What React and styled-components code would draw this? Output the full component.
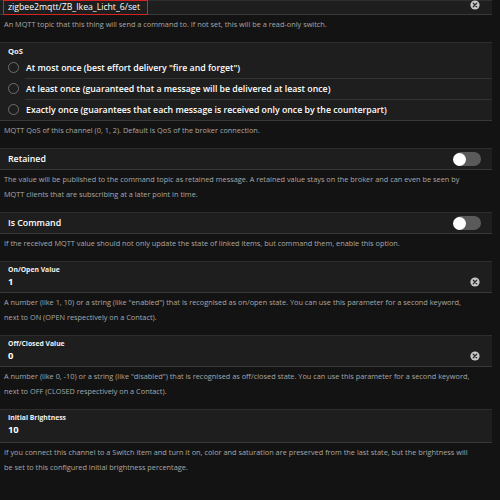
import styled, { createGlobalStyle } from "styled-components";

const GlobalStyle = createGlobalStyle`
    html, body {
        margin: 0;
        padding: 0;
        background-color: #141414;
    }
    body {
        font-family: "Open Sans", "Noto Sans", sans-serif;
        -webkit-font-smoothing: antialiased;
    }
`;

function ClearIcon() {
    return (
        <svg width="10" height="10" viewBox="0 0 10 10" style={{ display: "block" }}>
            <circle cx="5" cy="5" r="4.6" fill="#c8c8c8" />
            <path d="M3.3 3.3 L6.7 6.7 M6.7 3.3 L3.3 6.7" stroke="#2a2a2a" strokeWidth="1.3" strokeLinecap="round" />
        </svg>
    );
}

function App() {
    return (
        <>
            <GlobalStyle />
            <Page>
                <List>
                    {/* topic input, cut at the top edge */}
                    <Card height={15}>
                        <TopicInput>zigbee2mqtt/ZB_Ikea_Licht_6/set</TopicInput>
                        <ClearSlot top={-1}>
                            <ClearIcon />
                        </ClearSlot>
                    </Card>
                    <Hint>An MQTT topic that this thing will send a command to. If not set, this will be a read-only switch.</Hint>

                    {/* QoS */}
                    <Card>
                        <GroupTitle>QoS</GroupTitle>
                        <RadioRow>
                            <Radio />
                            <RadioLabel>At most once (best effort delivery "fire and forget")</RadioLabel>
                        </RadioRow>
                        <RadioRow divider>
                            <Radio />
                            <RadioLabel>At least once (guaranteed that a message will be delivered at least once)</RadioLabel>
                        </RadioRow>
                        <RadioRow divider>
                            <Radio />
                            <RadioLabel>Exactly once (guarantees that each message is received only once by the counterpart)</RadioLabel>
                        </RadioRow>
                    </Card>
                    <Hint>MQTT QoS of this channel (0, 1, 2). Default is QoS of the broker connection.</Hint>

                    <Card height={22}>
                        <ToggleRow>
                            <RowLabel>Retained</RowLabel>
                            <Toggle>
                                <Knob />
                            </Toggle>
                        </ToggleRow>
                    </Card>
                    <Hint>
                        {"The value will be published to the command topic as retained message. A retained value stays on the broker and can even be seen by\nMQTT clients that are subscribing at a later point in time."}
                    </Hint>

                    <Card height={22}>
                        <ToggleRow>
                            <RowLabel>Is Command</RowLabel>
                            <Toggle>
                                <Knob />
                            </Toggle>
                        </ToggleRow>
                    </Card>
                    <Hint>If the received MQTT value should not only update the state of linked items, but command them, enable this option.</Hint>

                    <Card height={32}>
                        <FieldLabel>On/Open Value</FieldLabel>
                        <FieldValue>1</FieldValue>
                        <ClearSlot top={15}>
                            <ClearIcon />
                        </ClearSlot>
                    </Card>
                    <Hint>
                        {'A number (like 1, 10) or a string (like "enabled") that is recognised as on/open state. You can use this parameter for a second keyword,\nnext to ON (OPEN respectively on a Contact).'}
                    </Hint>

                    <Card height={32}>
                        <FieldLabel>Off/Closed Value</FieldLabel>
                        <FieldValue>0</FieldValue>
                        <ClearSlot top={15}>
                            <ClearIcon />
                        </ClearSlot>
                    </Card>
                    <Hint>
                        {'A number (like 0, -10) or a string (like "disabled") that is recognised as off/closed state. You can use this parameter for a second keyword,\nnext to OFF (CLOSED respectively on a Contact).'}
                    </Hint>

                    <Card height={34}>
                        <FieldLabel>Initial Brightness</FieldLabel>
                        <FieldValue>10</FieldValue>
                    </Card>
                    <Hint>
                        {"If you connect this channel to a Switch item and turn it on, color and saturation are preserved from the last state, but the brightness will\nbe set to this configured initial brightness percentage."}
                    </Hint>
                </List>
            </Page>
        </>
    );
}

const Page = styled.div`
    width: 500px;
    height: 500px;
    overflow: hidden;
    background-color: #131313;
`;

const List = styled.div`
    width: 492px;
    display: flex;
    flex-direction: column;
`;

const Card = styled.div`
    position: relative;
    box-sizing: border-box;
    height: ${(props) => (props.height ? `${props.height}px` : "auto")};
    background-color: #1e1e1e;
    border-top: 1px solid #2e2e2e;
    border-bottom: 1px solid #383838;
`;

const TopicInput = styled.div`
    box-sizing: border-box;
    position: absolute;
    left: 3px;
    top: -1px;
    width: 145px;
    height: 15px;
    border: 1.5px solid #d42323;
    padding: 0 0 0 4px;
    color: #ffffff;
    font-size: 8.7px;
    font-weight: 400;
    line-height: 12px;
    white-space: nowrap;
`;

const ClearSlot = styled.div`
    position: absolute;
    right: 12px;
    top: ${(props) => props.top}px;
    width: 10px;
    height: 10px;
`;

const Hint = styled.div`
    padding: 2px 6px 10px 4px;
    color: #a8a8a8;
    font-size: 7.35px;
    line-height: 15px;
    white-space: pre-line;
`;

const GroupTitle = styled.div`
    padding: 2px 0 0 8px;
    height: 12px;
    color: #f0f0f0;
    font-size: 7.6px;
    font-weight: 700;
    line-height: 13px;
`;

const RadioRow = styled.div`
    display: flex;
    align-items: center;
    height: 21px;
    padding-left: 8px;
    position: relative;
    ${(props) =>
        props.divider &&
        `
        &::before {
            content: "";
            position: absolute;
            left: 25px;
            right: 0;
            top: 0;
            border-top: 1px solid #333;
        }
    `}
`;

const Radio = styled.span`
    box-sizing: border-box;
    width: 11px;
    height: 11px;
    border-radius: 50%;
    border: 1px solid #6e6e6e;
    flex-shrink: 0;
`;

const RadioLabel = styled.span`
    margin-left: 7px;
    color: #ffffff;
    font-size: 8.75px;
    font-weight: 600;
    white-space: nowrap;
`;

const ToggleRow = styled.div`
    display: flex;
    align-items: center;
    justify-content: space-between;
    height: 100%;
    padding: 0 11px 0 8px;
`;

const RowLabel = styled.span`
    color: #ffffff;
    font-size: 8.8px;
    font-weight: 600;
`;

const Toggle = styled.span`
    position: relative;
    width: 27px;
    height: 14px;
    border-radius: 7px;
    background-color: #5a5a5a;
`;

const Knob = styled.span`
    position: absolute;
    left: -1px;
    top: 0.5px;
    width: 13px;
    height: 13px;
    border-radius: 50%;
    background-color: #ffffff;
`;

const FieldLabel = styled.div`
    padding: 2px 0 0 8px;
    height: 11px;
    color: #f0f0f0;
    font-size: 6.8px;
    font-weight: 700;
    line-height: 11px;
`;

const FieldValue = styled.div`
    padding-left: 8px;
    color: #ffffff;
    font-size: 9.4px;
    font-weight: 700;
    line-height: 14px;
`;

export default App;
